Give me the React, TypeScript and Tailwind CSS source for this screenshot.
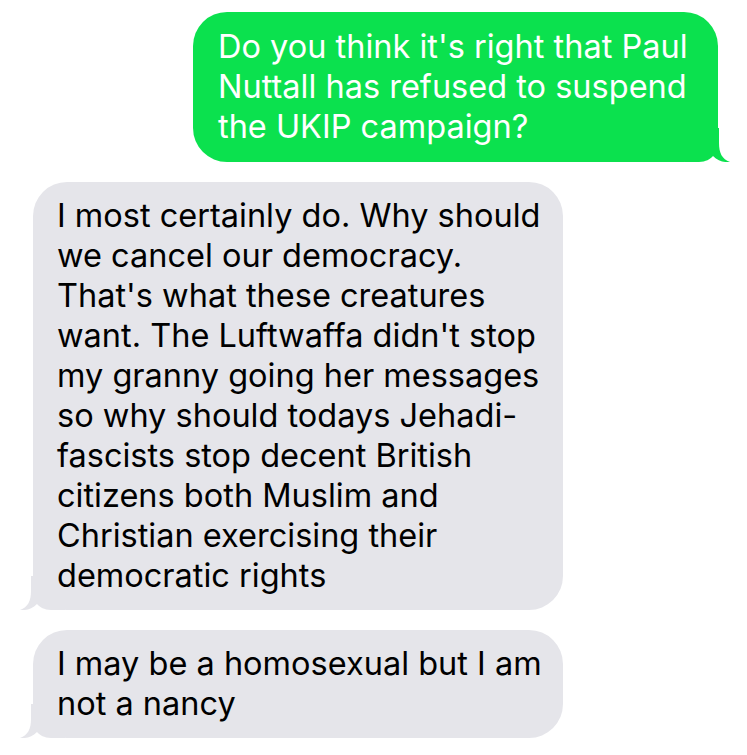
import React from "react";

const font = { fontFamily: "Inter, 'Noto Sans', sans-serif" };

function Tail({ color, side }: { color: string; side: "left" | "right" }) {
  return (
    <svg
      width="45"
      height="34"
      viewBox="0 0 45 34"
      className={
        side === "right"
          ? "absolute bottom-0 right-[-12px]"
          : "absolute bottom-0 left-[-13px] -scale-x-100"
      }
    >
      <path
        d="M0 0 H34 V15 C34 25 37 31 45 34 C39 34.6 33 33 28 28 C25 31.5 21 33.6 14 34 H0 Z"
        fill={color}
      />
    </svg>
  );
}

function Bubble({
  lines,
  me,
}: {
  lines: string[];
  me?: boolean;
}) {
  const color = me ? "#0be14e" : "#e5e5ea";
  return (
    <div
      className={
        me
          ? "relative self-end mr-[29px] w-[525px] rounded-[34px] bg-[#0be14e] pl-[25px] py-[15px] text-white"
          : "relative ml-[33px] w-[530px] rounded-[34px] bg-[#e5e5ea] pl-[24px] py-[14px] text-black"
      }
    >
      <Tail color={color} side={me ? "right" : "left"} />
      <div className="relative text-[32.5px] leading-[40px] whitespace-nowrap" style={font}>
        {lines.map((l, i) => (
          <div key={i}>{l}</div>
        ))}
      </div>
    </div>
  );
}

export default function App() {
  return (
    <div className="w-[747px] h-[755px] bg-white overflow-hidden flex flex-col pt-[12px] gap-[20px]">
      <Bubble
        me
        lines={[
          "Do you think it's right that Paul",
          "Nuttall has refused to suspend",
          "the UKIP campaign?",
        ]}
      />
      <Bubble
        lines={[
          "I most certainly do. Why should",
          "we cancel our democracy.",
          "That's what these creatures",
          "want. The Luftwaffa didn't stop",
          "my granny going her messages",
          "so why should todays Jehadi-",
          "fascists stop decent British",
          "citizens both Muslim and",
          "Christian exercising their",
          "democratic rights",
        ]}
      />
      <Bubble lines={["I may be a homosexual but I am", "not a nancy"]} />
    </div>
  );
}
